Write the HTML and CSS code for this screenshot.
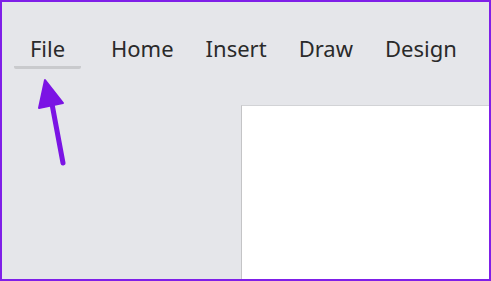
FILE: index.html
```html
<!DOCTYPE html>
<html lang="en">
<head>
  <meta charset="UTF-8" />
  <title>Ribbon tabs</title>
  <link rel="stylesheet" href="styles.css">
</head>
<body>
  <div class="frame">
    <nav class="tabs">
      <div class="tab tab-active">File</div>
      <div class="tab">Home</div>
      <div class="tab">Insert</div>
      <div class="tab">Draw</div>
      <div class="tab">Design</div>
    </nav>

    <div class="workspace">
      <div class="page"></div>
    </div>

    <!-- annotation arrow pointing at File -->
    <svg class="arrow" width="60" height="100" viewBox="0 0 60 100">
      <g fill="#7b14e4" stroke="#7b14e4" stroke-linejoin="round" stroke-linecap="round">
        <line x1="43" y1="85" x2="32" y2="26" stroke-width="5" />
        <polygon points="25,2 19,30 43,25" stroke-width="2" />
      </g>
    </svg>
  </div>
</body>
</html>
```

FILE: styles.css
```css
* {
  box-sizing: border-box;
}

body {
  margin: 0;
  font-family: 'Noto Sans', 'Open Sans', sans-serif;
}

.frame {
  position: relative;
  width: 491px;
  height: 281px;
  border: 2px solid #7f1fe8;
  background: #e5e6ea;
  display: flex;
  flex-direction: column;
  overflow: hidden;
}

.tabs {
  display: flex;
  align-items: flex-start;
  padding: 31px 0 0 12px;
  height: 103px;
}

.tab {
  flex-shrink: 0;
  font-size: 22px;
  color: #2a2a2a;
  margin-right: 32px;
  line-height: 30px;
}

.tab-active {
  width: 67px;
  text-align: center;
  margin-right: 30px;
  padding-bottom: 3px;
  border-bottom: 3px solid #c9cacd;
  border-radius: 0 0 2px 2px;
}

.workspace {
  flex: 1;
  display: flex;
  padding-left: 239px;
}

.page {
  flex: 1;
  background: #fff;
  border-left: 1px solid #c4c4c6;
  border-top: 1px solid #d2d3d6;
}

.arrow {
  position: absolute;
  left: 18px;
  top: 76px;
}
```
